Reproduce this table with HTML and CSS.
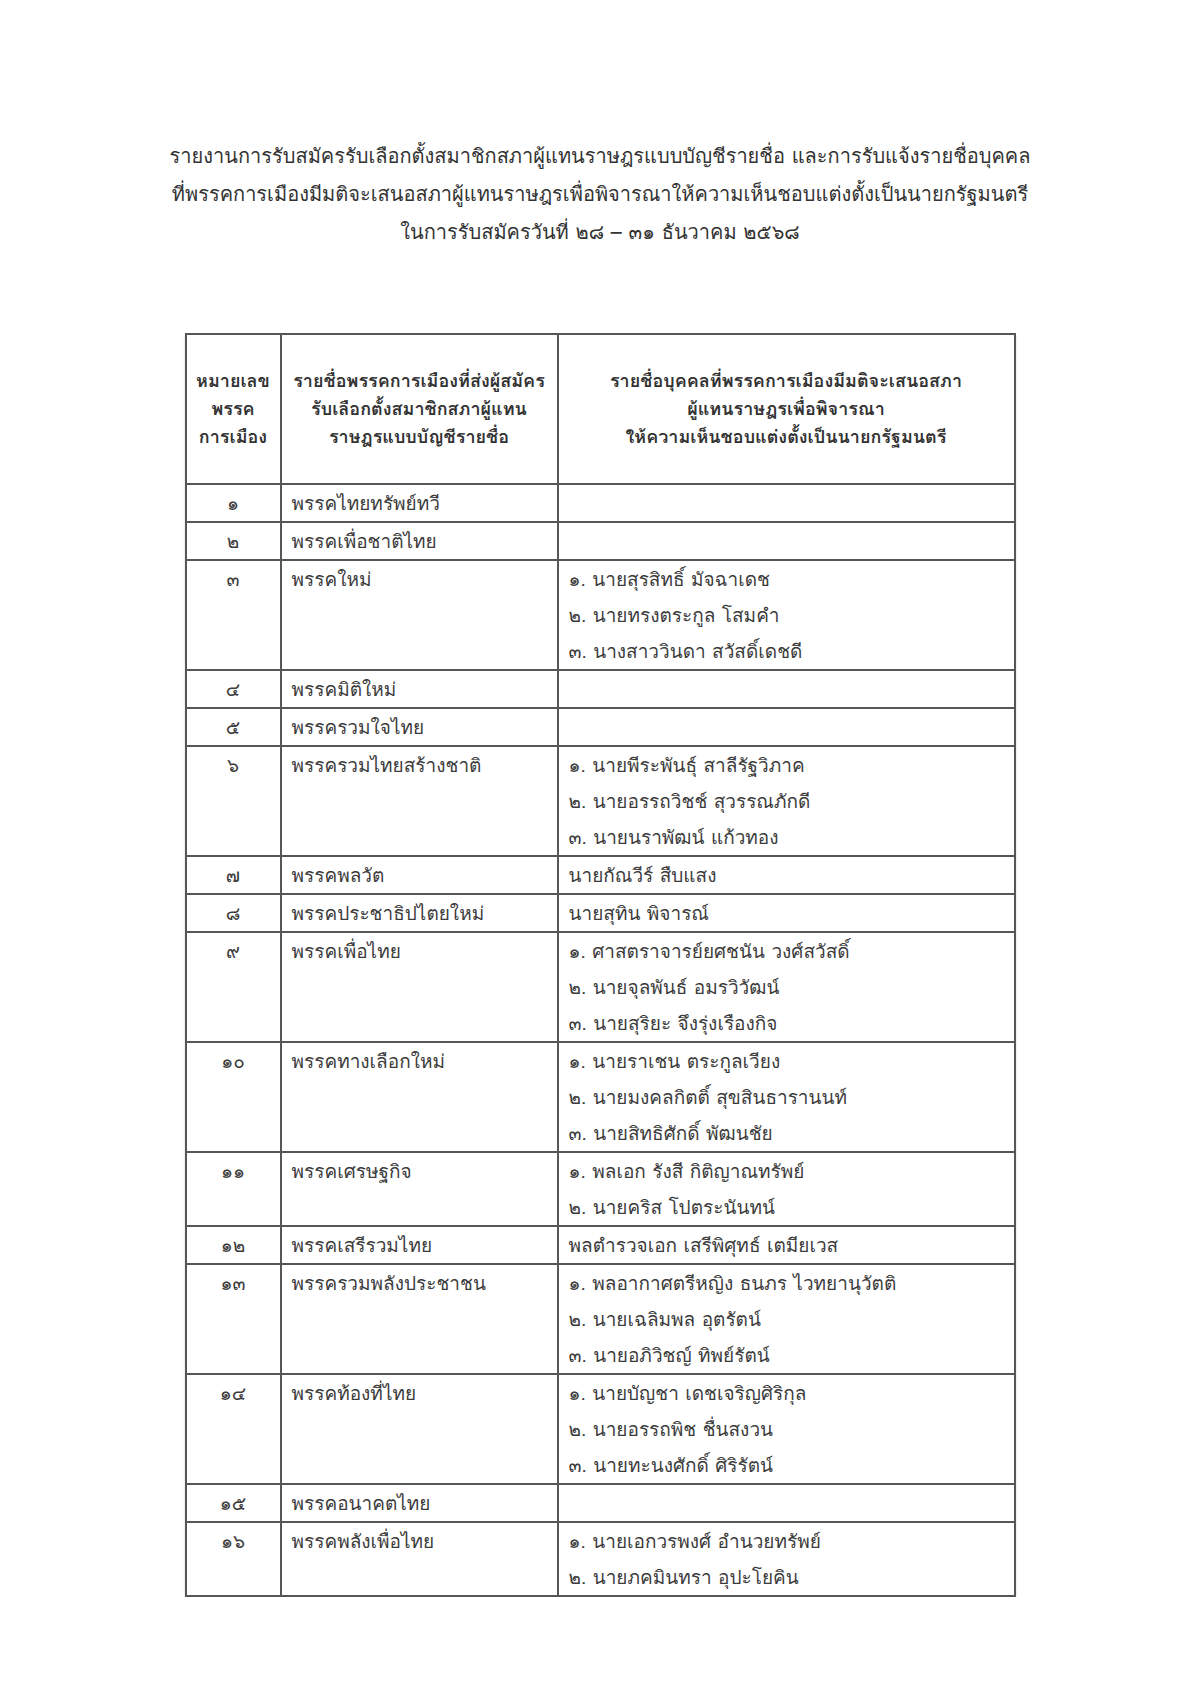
FILE: index.html
```html
<!DOCTYPE html>
<html lang="th">
<head>
<meta charset="utf-8">
<title>รายงานการรับสมัคร</title>
<link rel="stylesheet" href="styles.css">
</head>
<body>
<main class="page">
  <p class="title">
    <span class="line">รายงานการรับสมัครรับเลือกตั้งสมาชิกสภาผู้แทนราษฎรแบบบัญชีรายชื่อ และการรับแจ้งรายชื่อบุคคล</span>
    <span class="line">ที่พรรคการเมืองมีมติจะเสนอสภาผู้แทนราษฎรเพื่อพิจารณาให้ความเห็นชอบแต่งตั้งเป็นนายกรัฐมนตรี</span>
    <span class="line">ในการรับสมัครวันที่ ๒๘ – ๓๑ ธันวาคม ๒๕๖๘</span>
  </p>

  <table class="list">
    <colgroup>
      <col class="c-num">
      <col class="c-party">
      <col class="c-person">
    </colgroup>
    <thead>
      <tr>
        <th>หมายเลข<br>พรรค<br>การเมือง</th>
        <th>รายชื่อพรรคการเมืองที่ส่งผู้สมัคร<br>รับเลือกตั้งสมาชิกสภาผู้แทน<br>ราษฎรแบบบัญชีรายชื่อ</th>
        <th>รายชื่อบุคคลที่พรรคการเมืองมีมติจะเสนอสภา<br>ผู้แทนราษฎรเพื่อพิจารณา<br>ให้ความเห็นชอบแต่งตั้งเป็นนายกรัฐมนตรี</th>
      </tr>
    </thead>
    <tbody>
      <tr><td class="num">๑</td><td>พรรคไทยทรัพย์ทวี</td><td></td></tr>
      <tr><td class="num">๒</td><td>พรรคเพื่อชาติไทย</td><td></td></tr>
      <tr><td class="num">๓</td><td>พรรคใหม่</td><td>๑. นายสุรสิทธิ์ มัจฉาเดช<br>๒. นายทรงตระกูล โสมคำ<br>๓. นางสาววินดา สวัสดิ์เดชดี</td></tr>
      <tr><td class="num">๔</td><td>พรรคมิติใหม่</td><td></td></tr>
      <tr><td class="num">๕</td><td>พรรครวมใจไทย</td><td></td></tr>
      <tr><td class="num">๖</td><td>พรรครวมไทยสร้างชาติ</td><td>๑. นายพีระพันธุ์ สาลีรัฐวิภาค<br>๒. นายอรรถวิชช์ สุวรรณภักดี<br>๓. นายนราพัฒน์ แก้วทอง</td></tr>
      <tr><td class="num">๗</td><td>พรรคพลวัต</td><td>นายกัณวีร์ สืบแสง</td></tr>
      <tr><td class="num">๘</td><td>พรรคประชาธิปไตยใหม่</td><td>นายสุทิน พิจารณ์</td></tr>
      <tr><td class="num">๙</td><td>พรรคเพื่อไทย</td><td>๑. ศาสตราจารย์ยศชนัน วงศ์สวัสดิ์<br>๒. นายจุลพันธ์ อมรวิวัฒน์<br>๓. นายสุริยะ จึงรุ่งเรืองกิจ</td></tr>
      <tr><td class="num">๑๐</td><td>พรรคทางเลือกใหม่</td><td>๑. นายราเชน ตระกูลเวียง<br>๒. นายมงคลกิตติ์ สุขสินธารานนท์<br>๓. นายสิทธิศักดิ์ พัฒนชัย</td></tr>
      <tr><td class="num">๑๑</td><td>พรรคเศรษฐกิจ</td><td>๑. พลเอก รังสี กิติญาณทรัพย์<br>๒. นายคริส โปตระนันทน์</td></tr>
      <tr><td class="num">๑๒</td><td>พรรคเสรีรวมไทย</td><td>พลตำรวจเอก เสรีพิศุทธ์ เตมียเวส</td></tr>
      <tr><td class="num">๑๓</td><td>พรรครวมพลังประชาชน</td><td>๑. พลอากาศตรีหญิง ธนภร ไวทยานุวัตติ<br>๒. นายเฉลิมพล อุตรัตน์<br>๓. นายอภิวิชญ์ ทิพย์รัตน์</td></tr>
      <tr><td class="num">๑๔</td><td>พรรคท้องที่ไทย</td><td>๑. นายบัญชา เดชเจริญศิริกุล<br>๒. นายอรรถพิช ชื่นสงวน<br>๓. นายทะนงศักดิ์ ศิริรัตน์</td></tr>
      <tr><td class="num">๑๕</td><td>พรรคอนาคตไทย</td><td></td></tr>
      <tr><td class="num">๑๖</td><td>พรรคพลังเพื่อไทย</td><td>๑. นายเอกวรพงศ์ อำนวยทรัพย์<br>๒. นายภคมินทรา อุปะโยคิน</td></tr>
    </tbody>
  </table>
</main>
</body>
</html>
```

FILE: styles.css
```css
html, body {
  margin: 0;
  padding: 0;
  background: #ffffff;
}

body {
  font-family: "Loma", "Garuda", "Noto Sans Thai Looped", "Noto Serif Thai", "Noto Sans Thai", "Noto Sans", "DejaVu Sans", sans-serif;
  color: #3c3c3c;
}

.page {
  width: 1200px;
  padding-top: 137px;
}

.title {
  margin: 0;
  text-align: center;
  font-size: 20px;
  line-height: 38px;
  color: #333333;
}

.title .line {
  display: block;
}

.list {
  margin: 82px auto 0;
  width: 829px;
  border-collapse: collapse;
  table-layout: fixed;
  box-shadow: 0 3px 2px rgba(0, 0, 0, 0.18);
}

.c-num { width: 95px; }
.c-party { width: 277px; }
.c-person { width: 457px; }

.list th,
.list td {
  border: 2px solid #565656;
  padding: 0 10px;
  vertical-align: top;
  text-align: left;
  font-size: 19px;
  line-height: 36px;
  font-weight: normal;
}

.list th {
  height: 148px;
  vertical-align: middle;
  text-align: center;
  font-weight: bold;
  font-size: 18px;
  line-height: 28px;
  color: #333333;
  padding: 0 4px;
}

.list td.num {
  text-align: center;
  padding: 0 4px;
}
```
